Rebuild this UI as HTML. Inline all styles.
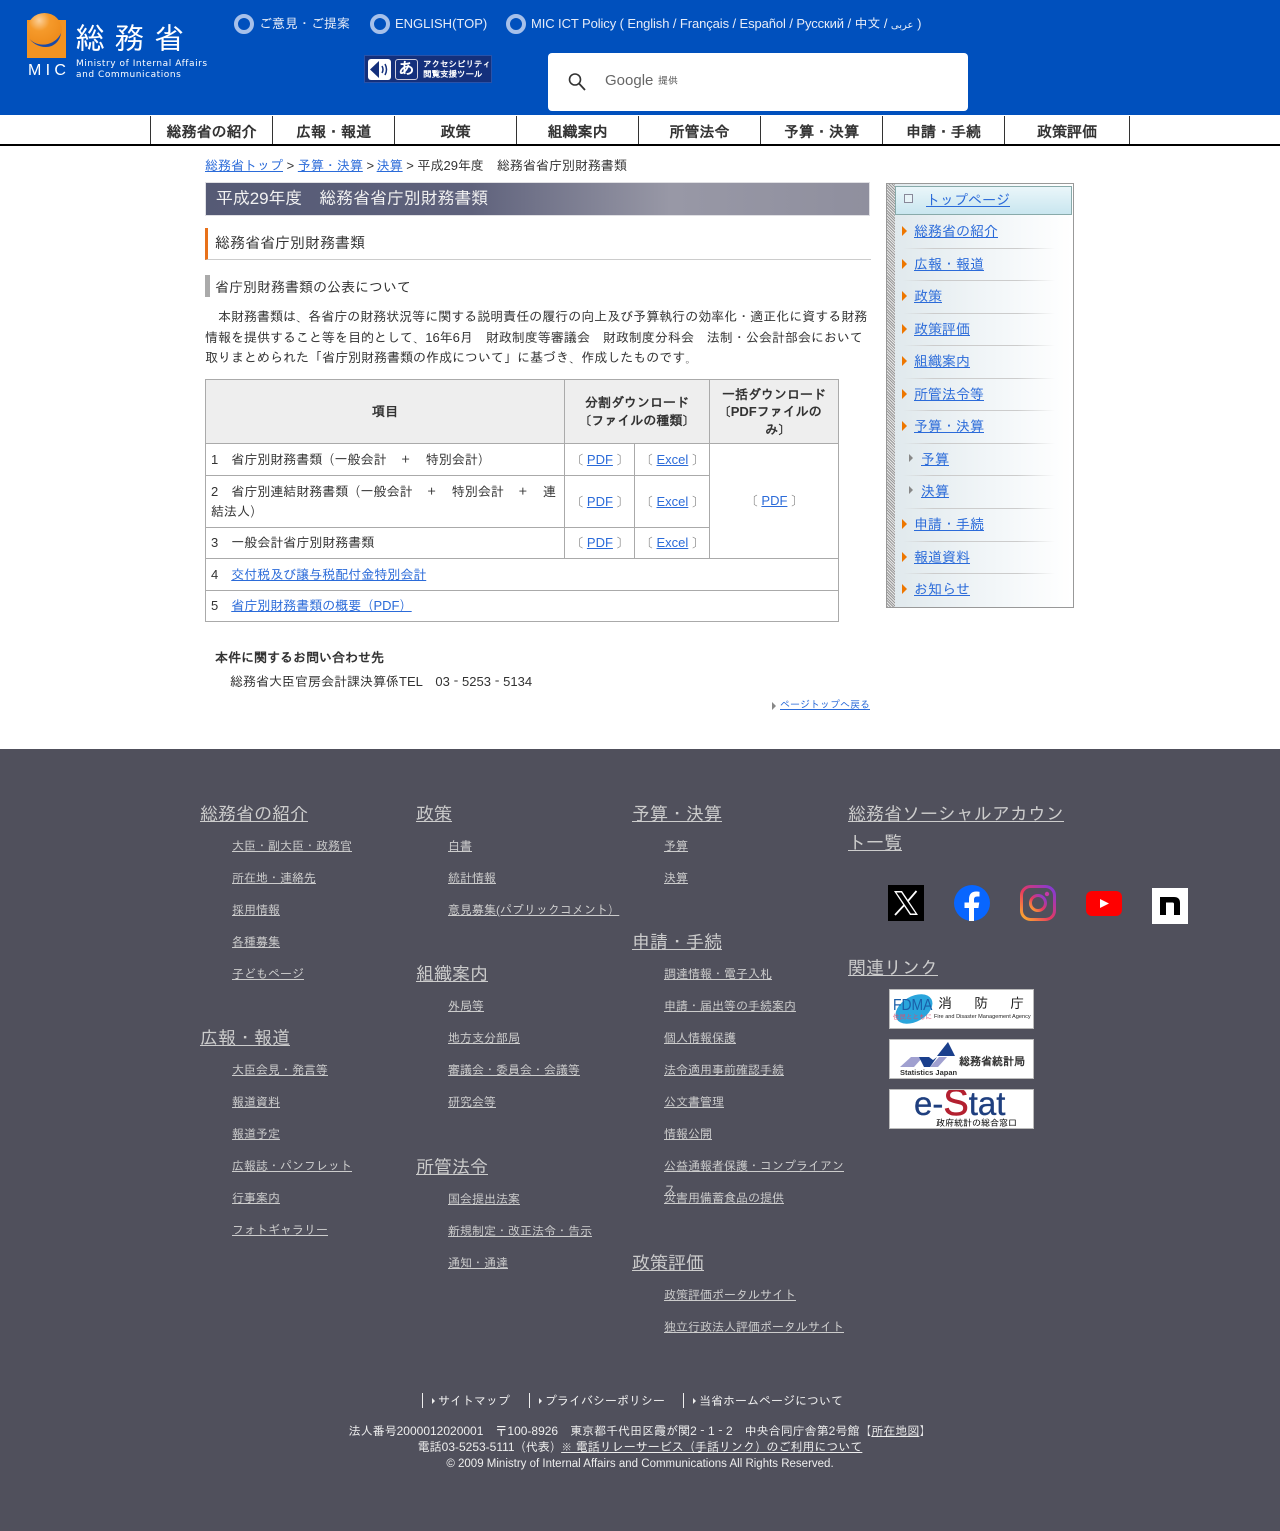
<!DOCTYPE html>
<html lang="ja"><head><meta charset="utf-8"><title>平成29年度 総務省省庁別財務書類</title>
<style>
*{box-sizing:border-box}
html,body{margin:0;padding:0}
body{position:relative;width:1280px;height:1531px;overflow:hidden;background:#fff;font-family:"Liberation Sans","NanumGothic","IPAGothic",sans-serif;color:#333;font-size:13px}
.a{position:absolute;white-space:nowrap}
a{color:#2b6bd9;text-decoration:underline}
.i{font-family:"IPAGothic",sans-serif}
.p{letter-spacing:1px}
.hd{position:absolute;left:0;top:0;width:1280px;height:115px;background:#0050bd}
.top{color:#e6ecf8;font-size:13px;line-height:18px;top:15px}
.rd{position:absolute;top:14px;width:20px;height:20px;border-radius:50%;border:4px solid #a6c0ea;background:#0050bd}
.nav{position:absolute;left:0;top:115px;width:1280px;height:31px;background:#fff;border-bottom:2px solid #000}
.nav div{position:absolute;top:1px;height:28px;border-left:1px solid #333;font-size:15px;font-weight:bold;line-height:33px;text-align:center;color:#333}
table{position:absolute;left:205px;top:379px;width:633px;border-collapse:collapse;table-layout:fixed;font-size:13px;line-height:20px;color:#333}
td,th{border:1px solid #aaa;padding:0 5px}
th{background:#eee;text-align:center;padding:1px 8px 0}
.c{text-align:center;color:#777;white-space:nowrap;padding:0 0 0 1px}
.sb{position:absolute;left:886px;top:183px;width:188px;height:425px;border:1px solid #999;background:linear-gradient(90deg,#dfe8ec 0,#f3f7f9 60%,#fff 100%)}
.hatch{position:absolute;left:0;top:0;width:8px;height:423px;background:repeating-linear-gradient(45deg,#999 0 1px,#e8e8e8 1px 2px)}
.sbt{position:absolute;left:8px;top:2px;width:177px;height:29px;border:1px solid #8aa;background:linear-gradient(#eaf6fa,#c9e6ef)}
.it{position:absolute;font-size:14px;line-height:18px;white-space:nowrap}
.ln{position:absolute;left:903px;width:152px;height:1px;background:linear-gradient(90deg,#fff0,#ccc 20%,#ccc 75%,#fff0)}
.tr{position:absolute;width:0;height:0;border-left:5px solid #ee7700;border-top:5px solid transparent;border-bottom:5px solid transparent}
.ft{position:absolute;left:0;top:749px;width:1280px;height:782px;background:#50505c}
.h{position:absolute;font-size:18px;line-height:29px;color:#ccc;text-decoration:underline;white-space:nowrap}
.l{position:absolute;font-size:12px;line-height:18px;color:#ccc;text-decoration:underline;white-space:nowrap}
.fb{position:absolute;color:#eee;font-size:12px;line-height:16px;white-space:nowrap}
.banner{position:absolute;left:889px;width:145px;height:40px;background:#fff;border:1px solid #bbb;overflow:hidden}
</style></head><body>
<div class="hd">
<div style="position:absolute;left:27px;top:20px;width:39px;height:38px;background:#f39321"></div>
<div style="position:absolute;left:27px;top:13px;width:35px;height:34px;border-radius:50%;background:radial-gradient(circle at 35% 22%,#fbd09a 0,#f59a2b 30%,#ea8210 100%)"></div>
<svg style="position:absolute;left:27px;top:13px" width="38" height="38" viewBox="0 0 38 38"><path d="M1 24c4 6 12 9 20 7 6-1.500 11-6 13-11-1 8-7 14-15 14-8 0-14-4-18-10z" fill="#1b4aa8"/></svg>
<div class="a" style="left:75px;top:20px;font-size:30px;line-height:40px;letter-spacing:9.5px;color:#fff">総務省</div>
<div class="a" style="left:28px;top:61px;font-size:16px;line-height:20px;letter-spacing:4.300px;color:#fff;font-weight:normal">MIC</div>
<div class="a" style="left:76px;top:59px;font-size:9px;line-height:10.5px;letter-spacing:.55px;color:#fff;font-family:'DejaVu Sans',sans-serif">Ministry of Internal Affairs<br>and Communications</div>
<span class="rd" style="left:234px"></span><div class="a top" style="left:259px">ご意見・ご提案</div>
<span class="rd" style="left:370px"></span><div class="a top" style="left:395px">ENGLISH(TOP)</div>
<span class="rd" style="left:506px"></span><div class="a top" style="left:531px;letter-spacing:-.095px">MIC ICT Policy ( English / Français / Español / Русский / 中文 / <span style="font-size:10px">عربى</span> )</div>
<div style="position:absolute;left:364px;top:55px;width:128px;height:28px;background:#14307c;border:1px solid #2a52a8"></div>
<div style="position:absolute;left:368px;top:59px;width:23px;height:21px;background:#fff;border-radius:3px"></div>
<svg style="position:absolute;left:368px;top:59px" width="23" height="21" viewBox="0 0 23 21"><path d="M2 10.500L11 2v17z" fill="#14307c"/><path d="M14 7q2 3.500 0 7M17 5q3 5.500 0 11" fill="none" stroke="#14307c" stroke-width="1.500"/></svg>
<div class="a" style="left:395px;top:59px;width:23px;height:21px;background:#14307c;border:1px solid #ccd;border-radius:3px;color:#fff;font-size:16px;line-height:19px;text-align:center;font-weight:bold">あ</div>
<div class="a" style="left:423px;top:59px;font-size:8.5px;line-height:10px;color:#fff;font-weight:bold">アクセシビリティ<br>閲覧支援ツール</div>
<div style="position:absolute;left:548px;top:53px;width:420px;height:58px;background:#fff;border-radius:4px"></div>
<svg style="position:absolute;left:566px;top:71px" width="22" height="22" viewBox="0 0 22 22"><circle cx="9" cy="8.500" r="5.500" fill="none" stroke="#333" stroke-width="1.600"/><path d="M13 12.500l6 6.500" stroke="#333" stroke-width="1.800"/></svg>
<div class="a" style="left:605px;top:71px;font-size:15px;line-height:20px;color:#666">Google</div>
<div class="a" style="left:658px;top:74px;font-size:10px;line-height:15px;color:#555">提供</div>
</div>
<div class="nav">
<div style="left:150px;width:122px">総務省の紹介</div><div style="left:272px;width:122px">広報・報道</div><div style="left:394px;width:122px">政策</div><div style="left:516px;width:122px">組織案内</div><div style="left:638px;width:122px">所管法令</div><div style="left:760px;width:122px">予算・決算</div><div style="left:882px;width:122px">申請・手続</div><div style="left:1004px;width:126px;border-right:1px solid #333">政策評価</div>
</div>
<div class="a" style="left:205px;top:157px;line-height:18px"><a href="#">総務省トップ</a> &gt; <a href="#">予算・決算</a> &gt; <a href="#" style="margin-left:-1px">決算</a> &gt; 平成29年度　総務省省庁別財務書類</div>
<div style="position:absolute;left:205px;top:182px;width:665px;height:34px;border:1px solid #e0e0e4;background:linear-gradient(90deg,#555a75 0,#5f627c 40%,#9898a6 70%,#8f8f9e 100%)"></div>
<div class="a" style="left:216px;top:186px;font-size:17px;line-height:26px;color:#f2f2f2;letter-spacing:-.1px">平成29年度　総務省省庁別財務書類</div>
<div style="position:absolute;left:205px;top:228px;width:666px;height:32px;border-left:3px solid #e8711a;border-bottom:1px solid #ccc"></div>
<div class="a" style="left:215px;top:233px;font-size:15px;line-height:22px">総務省省庁別財務書類</div>
<div style="position:absolute;left:205px;top:275px;width:5px;height:22px;background:#aaa"></div>
<div class="a" style="left:215px;top:277px;font-size:14px;line-height:20px">省庁別財務書類の公表について</div>
<div class="a" style="left:205px;top:307px;width:665px;white-space:normal;line-height:20.5px;text-indent:13px">本財務書類は、各省庁の財務状況等に関する説明責任の履行の向上及び予算執行の効率化・適正化に資する財務情報を提供すること等を目的として、16年6月　財政制度等審議会　財政制度分科会　法制・公会計部会において取りまとめられた<span class="i">「</span>省庁別財務書類の作成について<span class="i">」</span>に基づき、作成したものです。</div>
<table>
<colgroup><col style="width:359px"><col style="width:70px"><col style="width:75px"><col style="width:129px"></colgroup>
<tr style="height:64px"><th>項目</th><th colspan="2" style="line-height:18px">分割ダウンロード<br>〔ファイルの種類〕</th><th style="line-height:17.5px;padding:1px 9px 0">一括ダウンロード〔PDFファイルのみ〕</th></tr>
<tr style="height:32px"><td>1　省庁別財務書類（一般会計　<span class="p">＋</span>　特別会計）</td><td class="c">〔 <a href="#">PDF</a> 〕</td><td class="c">〔 <a href="#">Excel</a> 〕</td><td class="c" rowspan="3">〔 <a href="#">PDF</a> 〕</td></tr>
<tr style="height:52px"><td>2　省庁別連結財務書類（一般会計　<span class="p">＋</span>　特別会計　<span class="p">＋</span>　連結法人）</td><td class="c">〔 <a href="#">PDF</a> 〕</td><td class="c">〔 <a href="#">Excel</a> 〕</td></tr>
<tr style="height:31px"><td>3　一般会計省庁別財務書類</td><td class="c">〔 <a href="#">PDF</a> 〕</td><td class="c">〔 <a href="#">Excel</a> 〕</td></tr>
<tr style="height:32px"><td colspan="4">4　<a href="#">交付税及び譲与税配付金特別会計</a></td></tr>
<tr style="height:31px"><td colspan="4">5　<a href="#">省庁別財務書類の概要（PDF）</a></td></tr>
</table>
<div class="a" style="left:215px;top:649px;font-weight:bold;line-height:18px">本件に関するお問い合わせ先</div>
<div class="a" style="left:230px;top:673px;line-height:18px">総務省大臣官房会計課決算係TEL　03－5253－5134</div>
<div class="tr" style="left:772px;top:702px;border-left:4px solid #888;border-top-width:4px;border-bottom-width:4px"></div>
<a class="a" href="#" style="left:780px;top:699px;font-size:10px;line-height:14px">ページトップへ戻る</a>

<div class="sb"><div class="hatch"></div><div class="sbt"></div>
<div style="position:absolute;left:17px;top:10px;width:9px;height:9px;border:1px solid #889;background:#e8f4f8"></div></div>
<a class="it" href="#" style="left:926px;top:191px">トップページ</a>
<span class="tr" style="left:902px;top:226px"></span><a class="it" href="#" style="left:914px;top:222px">総務省の紹介</a><div class="ln" style="top:248px"></div>
<span class="tr" style="left:902px;top:259px"></span><a class="it" href="#" style="left:914px;top:255px">広報・報道</a><div class="ln" style="top:280px"></div>
<span class="tr" style="left:902px;top:291px"></span><a class="it" href="#" style="left:914px;top:287px">政策</a><div class="ln" style="top:313px"></div>
<span class="tr" style="left:902px;top:324px"></span><a class="it" href="#" style="left:914px;top:320px">政策評価</a><div class="ln" style="top:345px"></div>
<span class="tr" style="left:902px;top:356px"></span><a class="it" href="#" style="left:914px;top:352px">組織案内</a><div class="ln" style="top:378px"></div>
<span class="tr" style="left:902px;top:389px"></span><a class="it" href="#" style="left:914px;top:385px">所管法令等</a><div class="ln" style="top:410px"></div>
<span class="tr" style="left:902px;top:421px"></span><a class="it" href="#" style="left:914px;top:417px">予算・決算</a><div class="ln" style="top:443px"></div>
<span class="tr" style="left:909px;top:454px;border-left:4px solid #888;border-top-width:4px;border-bottom-width:4px"></span><a class="it" href="#" style="left:921px;top:450px">予算</a><div class="ln" style="top:475px"></div>
<span class="tr" style="left:909px;top:486px;border-left:4px solid #888;border-top-width:4px;border-bottom-width:4px"></span><a class="it" href="#" style="left:921px;top:482px">決算</a><div class="ln" style="top:508px"></div>
<span class="tr" style="left:902px;top:519px"></span><a class="it" href="#" style="left:914px;top:515px">申請・手続</a><div class="ln" style="top:541px"></div>
<span class="tr" style="left:902px;top:552px"></span><a class="it" href="#" style="left:914px;top:548px">報道資料</a><div class="ln" style="top:573px"></div>
<span class="tr" style="left:902px;top:584px"></span><a class="it" href="#" style="left:914px;top:580px">お知らせ</a>

<div class="ft"></div>
<a class="h" href="#" style="left:200px;top:800px">総務省の紹介</a>
<a class="l" href="#" style="left:232px;top:837px">大臣・副大臣・政務官</a><a class="l" href="#" style="left:232px;top:869px">所在地・連絡先</a><a class="l" href="#" style="left:232px;top:901px">採用情報</a><a class="l" href="#" style="left:232px;top:933px">各種募集</a><a class="l" href="#" style="left:232px;top:965px">子どもページ</a>
<a class="h" href="#" style="left:200px;top:1024px">広報・報道</a>
<a class="l" href="#" style="left:232px;top:1061px">大臣会見・発言等</a><a class="l" href="#" style="left:232px;top:1093px">報道資料</a><a class="l" href="#" style="left:232px;top:1125px">報道予定</a><a class="l" href="#" style="left:232px;top:1157px">広報誌・パンフレット</a><a class="l" href="#" style="left:232px;top:1189px">行事案内</a><a class="l" href="#" style="left:232px;top:1221px">フォトギャラリー</a>
<a class="h" href="#" style="left:416px;top:800px">政策</a>
<a class="l" href="#" style="left:448px;top:837px">白書</a><a class="l" href="#" style="left:448px;top:869px">統計情報</a><a class="l" href="#" style="left:448px;top:901px">意見募集(パブリックコメント）</a>
<a class="h" href="#" style="left:416px;top:960px">組織案内</a>
<a class="l" href="#" style="left:448px;top:997px">外局等</a><a class="l" href="#" style="left:448px;top:1029px">地方支分部局</a><a class="l" href="#" style="left:448px;top:1061px">審議会・委員会・会議等</a><a class="l" href="#" style="left:448px;top:1093px">研究会等</a>
<a class="h" href="#" style="left:416px;top:1153px">所管法令</a>
<a class="l" href="#" style="left:448px;top:1190px">国会提出法案</a><a class="l" href="#" style="left:448px;top:1222px">新規制定・改正法令・告示</a><a class="l" href="#" style="left:448px;top:1254px">通知・通達</a>
<a class="h" href="#" style="left:632px;top:800px">予算・決算</a>
<a class="l" href="#" style="left:664px;top:837px">予算</a><a class="l" href="#" style="left:664px;top:869px">決算</a>
<a class="h" href="#" style="left:632px;top:928px">申請・手続</a>
<a class="l" href="#" style="left:664px;top:965px">調達情報・電子入札</a><a class="l" href="#" style="left:664px;top:997px">申請・届出等の手続案内</a><a class="l" href="#" style="left:664px;top:1029px">個人情報保護</a><a class="l" href="#" style="left:664px;top:1061px">法令適用事前確認手続</a><a class="l" href="#" style="left:664px;top:1093px">公文書管理</a><a class="l" href="#" style="left:664px;top:1125px">情報公開</a>
<a class="l" href="#" style="left:664px;top:1154px;width:180px;line-height:24px;white-space:normal;word-break:break-all">公益通報者保護・コンプライアンス</a>
<a class="l" href="#" style="left:664px;top:1189px">災害用備蓄食品の提供</a>
<a class="h" href="#" style="left:632px;top:1249px">政策評価</a>
<a class="l" href="#" style="left:664px;top:1286px">政策評価ポータルサイト</a><a class="l" href="#" style="left:664px;top:1318px">独立行政法人評価ポータルサイト</a>
<a class="h" href="#" style="left:848px;top:800px;width:216px;white-space:normal">総務省ソーシャルアカウント一覧</a>
<div style="position:absolute;left:888px;top:885px;width:36px;height:36px;background:#000"></div>
<svg style="position:absolute;left:888px;top:885px" width="36" height="36" viewBox="0 0 36 36"><path d="M6 6h8l16 24h-8zM8.500 7.500L22.800 28.500H27.500L13.200 7.500z" fill="#fff" fill-rule="evenodd"/><path d="M28.500 6L19.500 16.500M16.300 20L7 30" stroke="#fff" stroke-width="1.800"/></svg>
<svg style="position:absolute;left:954px;top:885px" width="36" height="36" viewBox="0 0 36 36"><circle cx="18" cy="18" r="18" fill="#0866ff"/><path d="M15 36V23h-4.500v-5.500H15V14c0-5 3-7.500 7-7.500 1.800 0 3.500.3 3.500.3v4.700h-2.300c-2.400 0-3.200 1.400-3.200 3v3h5.300l-.9 5.500H20V36z" fill="#fff"/></svg>
<svg style="position:absolute;left:1020px;top:885px" width="36" height="36" viewBox="0 0 36 36"><defs><linearGradient id="ig" x1="0" y1="1" x2="1" y2="0"><stop offset="0" stop-color="#fdb32b"/><stop offset=".45" stop-color="#e8385f"/><stop offset="1" stop-color="#7b3ae0"/></linearGradient></defs><rect x="1.500" y="1.500" width="33" height="33" rx="9" fill="none" stroke="url(#ig)" stroke-width="3"/><circle cx="18" cy="18" r="7.500" fill="none" stroke="url(#ig)" stroke-width="3"/><circle cx="27" cy="9" r="2.200" fill="#c638a8"/></svg>
<svg style="position:absolute;left:1086px;top:891px" width="36" height="25" viewBox="0 0 36 25"><rect width="36" height="25" rx="6" fill="#f00"/><path d="M14 8l9 4.500-9 4.500z" fill="#fff"/></svg>
<div style="position:absolute;left:1152px;top:888px;width:36px;height:36px;background:#fff"></div>
<svg style="position:absolute;left:1152px;top:888px" width="36" height="36" viewBox="0 0 36 36"><path d="M8 27V9h14c4 0 6 2 6 6v12h-6V16c0-1-.5-1.500-1.500-1.500H14V27z" fill="#000"/></svg>
<a class="h" href="#" style="left:848px;top:954px">関連リンク</a>
<div class="banner" style="top:989px">
<div style="position:absolute;left:4px;top:1px;width:40px;height:36px;border-radius:50%;background:#2aa5dc;transform:rotate(-30deg) scaleY(.7)"></div>
<div class="a" style="left:3px;top:6px;font-size:16px;line-height:20px;color:#1a5ea8;transform:scaleX(.87);transform-origin:0 0">FDMA</div>
<div class="a" style="left:3px;top:23px;font-size:6.500px;line-height:9px;color:#d85070">住民とともに</div>
<div class="a" style="left:48px;top:4px;font-size:14px;line-height:18px;color:#222;letter-spacing:22px">消防庁</div>
<div class="a" style="left:44px;top:22px;font-size:5.600px;line-height:10px;color:#222">Fire and Disaster Management Agency</div>
</div>
<div class="banner" style="top:1039px">
<svg style="position:absolute;left:8px;top:1px" width="64" height="30" viewBox="0 0 64 30"><path d="M2 26L13 16H25L16 26z" fill="#a0a0d0"/><path d="M21 16H31L35 19 39 16 32 26H26z" fill="#1a3f8c"/><path d="M32 26L41 16H49L40 26z" fill="#a0a0d0"/><path d="M39 15L50 1 57 15z" fill="#1a3f8c"/></svg>
<div class="a" style="left:10px;top:28px;font-size:7.500px;line-height:10px;font-weight:bold;color:#333">Statistics Japan</div>
<div class="a" style="left:69px;top:14px;font-size:11px;line-height:16px;font-weight:bold;color:#333">総務省統計局</div>
</div>
<div class="banner" style="top:1089px">
<div class="a" style="left:24px;top:-6px;font-size:33px;line-height:38px;-webkit-text-stroke:.3px #1f3f7f;color:#1f3f7f">e-<span style="color:#b32030;-webkit-text-stroke:.6px #b32030;font-size:38px">S</span>tat</div>
<div class="a" style="left:46px;top:28px;font-size:9px;line-height:11px;color:#000;background:#fff">政府統計の総合窓口</div>
</div>
<div style="position:absolute;left:422px;top:1393px;width:1px;height:15px;background:#eee"></div>
<div style="position:absolute;left:529px;top:1393px;width:1px;height:15px;background:#eee"></div>
<div style="position:absolute;left:683px;top:1393px;width:1px;height:15px;background:#eee"></div>
<div class="tr" style="left:432px;top:1398px;border-left:3px solid #eee;border-top-width:3px;border-bottom-width:3px"></div>
<div class="tr" style="left:539px;top:1398px;border-left:3px solid #eee;border-top-width:3px;border-bottom-width:3px"></div>
<div class="tr" style="left:693px;top:1398px;border-left:3px solid #eee;border-top-width:3px;border-bottom-width:3px"></div>
<div class="fb" style="left:438px;top:1393px">サイトマップ</div><div class="fb" style="left:545px;top:1393px">プライバシーポリシー</div><div class="fb" style="left:699px;top:1393px">当省ホームページについて</div>
<div class="fb" style="left:0;width:1280px;top:1423px;text-align:center">法人番号2000012020001　<span class="i">〒</span>100-8926　東京都千代田区霞が関2－1－2　中央合同庁舎第2号館<span class="i">【</span><span style="text-decoration:underline">所在地図</span><span class="i">】</span></div>
<div class="fb" style="left:0;width:1280px;top:1439px;text-align:center">電話03-5253-5111（代表）<span style="text-decoration:underline">※ 電話リレーサービス（手話リンク）のご利用について</span></div>
<div class="fb" style="left:0;width:1280px;top:1456px;text-align:center;font-size:11.500px">© 2009 Ministry of Internal Affairs and Communications All Rights Reserved.</div>
</body></html>
